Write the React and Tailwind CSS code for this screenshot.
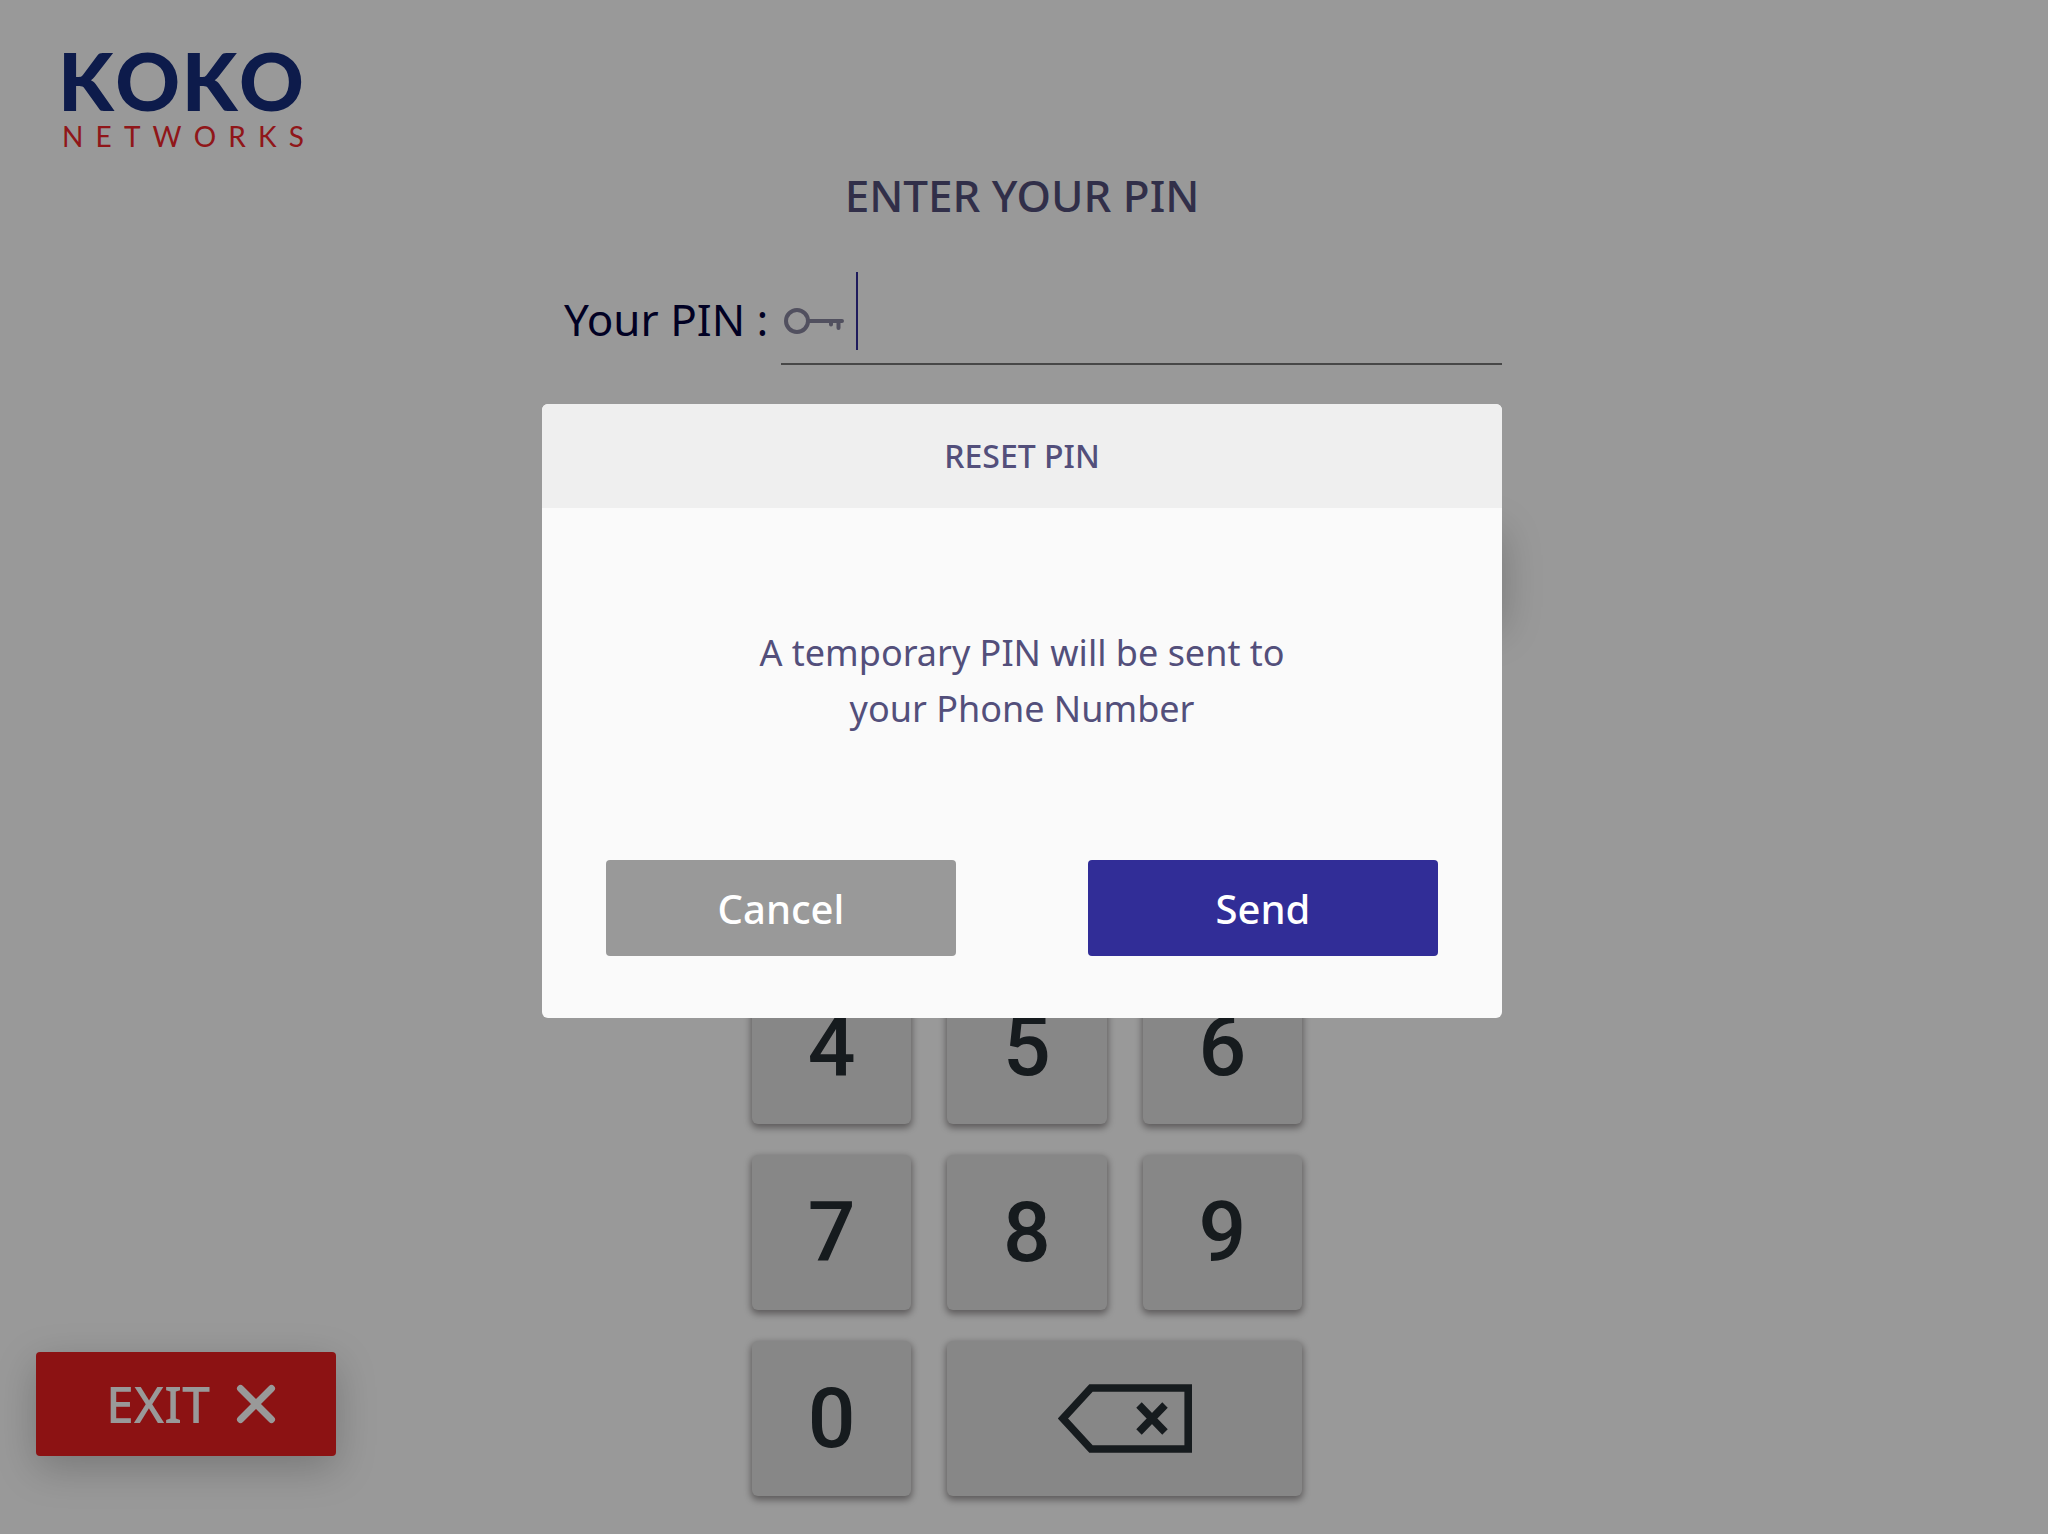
const keys = ["4", "5", "6", "7", "8", "9", "0"];

const keyStyle =
  "flex h-[155px] items-center justify-center rounded-md bg-[#e1e1e1] font-['Roboto',sans-serif] text-[84px] leading-none font-medium text-[#262d32] shadow-[0_3px_7px_1px_rgba(20,10,12,0.42)]";

function Logo() {
  return (
    <div className="flex w-60 flex-col gap-1.5 font-['Lato',sans-serif]">
      <div className="-ml-1.5 flex justify-between text-[80px] leading-[72px] font-black text-[#162d7d]">
        {"KOKO".split("").map((letter, i) => (
          <span key={i}>{letter}</span>
        ))}
      </div>
      <div className="-ml-0.5 flex justify-between text-[28px] leading-7 text-[#f0262a]">
        {"NETWORKS".split("").map((letter, i) => (
          <span key={i}>{letter}</span>
        ))}
      </div>
    </div>
  );
}

function KeyIcon() {
  return (
    <svg className="h-8 w-[62px] shrink-0" viewBox="0 0 62 32" fill="none" stroke="#88859e" strokeWidth="4" strokeLinecap="round" aria-hidden="true">
      <circle cx="14" cy="19" r="11" />
      <path d="M26 19H59M48 19V22.500M55.500 19V26" />
    </svg>
  );
}

function BackspaceIcon() {
  return (
    <svg className="h-[69px] w-[134px]" viewBox="0 0 134 69" fill="none" stroke="#262d32" strokeWidth="7.600" aria-hidden="true">
      <path d="M33 4H130.200V65H33L5 34.500Z" />
      <path d="M81 21L107 48M107 21L81 48" />
    </svg>
  );
}

function Dialog() {
  return (
    <div
      role="dialog"
      aria-modal="true"
      aria-labelledby="reset-title"
      className="w-[960px] overflow-hidden rounded-md bg-[#fafafa] text-center text-[#534f7b]"
    >
      <h2 id="reset-title" className="bg-[#efefef] text-[32px] leading-[104px] font-medium">
        RESET PIN
      </h2>
      <p className="mx-auto w-[600px] pt-[117px] text-[36px] leading-14">
        A temporary PIN will be sent to
        <br />
        your Phone Number
      </p>
      <div className="flex justify-between px-16 pt-[123px] pb-[62px]">
        <button className="h-24 w-[350px] rounded bg-[#999999] pt-0.5 text-[40px] font-medium text-white">Cancel</button>
        <button className="h-24 w-[350px] rounded bg-[#312d97] pt-0.5 text-[40px] font-medium text-white">Send</button>
      </div>
    </div>
  );
}

export default function App() {
  return (
    <div className="relative min-h-screen bg-white font-['Noto_Sans',sans-serif]">
      <div className="grid min-h-screen grid-cols-[1fr_960px_1fr] pr-1">
        <aside className="flex flex-col items-start justify-between pt-11 pb-20">
          <div className="pl-16">
            <Logo />
          </div>
          <button className="ml-9 flex h-[104px] w-[300px] items-center justify-center gap-[26px] rounded bg-[#e91e21] pl-16 pr-[54px] text-[50px] font-medium text-white shadow-[0_12px_40px_rgba(0,0,0,0.22)]">
            EXIT
            <svg className="size-10 shrink-0" viewBox="0 0 40 40" fill="none" stroke="white" strokeWidth="7" strokeLinecap="round" aria-hidden="true">
              <path d="M4.500 4.500L35.500 35.500M35.500 4.500L4.500 35.500" />
            </svg>
          </button>
        </aside>

        <main className="flex flex-col">
          <h1 className="pt-[165px] text-center text-[44px] leading-[60px] font-medium text-[#534f7b]">ENTER YOUR PIN</h1>
          <div className="flex items-start pt-[47px] pl-[22px]">
            <label htmlFor="pin" className="w-[217px] text-[44px] leading-[94px] text-[#03033c]">
              Your PIN :
            </label>
            <div className="flex h-[93px] flex-1 items-center gap-[11px] border-b-2 border-[#777777] pl-0.5">
              <KeyIcon />
              <span className="h-[78px] w-0.5 self-start bg-[#322d99]" />
              <input id="pin" type="password" className="min-w-0 flex-1 bg-transparent text-[44px] outline-none" />
            </div>
          </div>
          <div className="flex justify-end pt-[154px]">
            <button aria-label="Next" className="h-[98px] w-[300px] rounded bg-[#312d97] shadow-[0_12px_40px_rgba(0,0,0,0.22)]" />
          </div>
          <div className="ml-[210px] grid w-[550px] grid-cols-3 gap-x-9 gap-y-[31px] pt-[351px]">
            {keys.map((k) => (
              <button key={k} className={keyStyle}>
                {k}
              </button>
            ))}
            <button aria-label="Backspace" className={keyStyle + " col-span-2"}>
              <BackspaceIcon />
            </button>
          </div>
        </main>
      </div>

      <div className="absolute inset-x-0 top-0 bottom-0.5 flex items-start justify-center bg-black/40 pt-[404px] pr-1">
        <Dialog />
      </div>
    </div>
  );
}
